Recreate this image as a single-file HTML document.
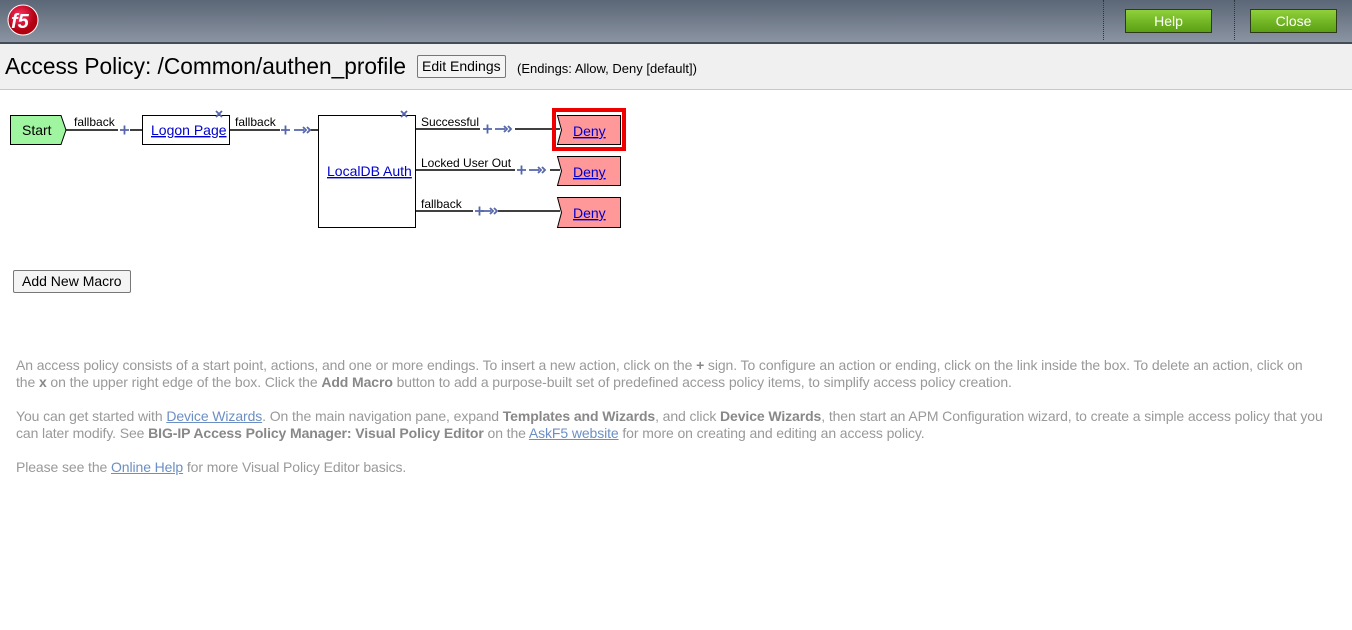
<!DOCTYPE html>
<html><head><style>
body{margin:0;width:1352px;height:630px;background:#fff;font-family:"Liberation Sans",sans-serif;position:relative;overflow:hidden}
.hdr{position:absolute;left:0;top:0;width:1352px;height:42px;background:linear-gradient(#5b6676,#8a94a2);border-bottom:2px solid #444c58}
.sep{position:absolute;top:0;height:40px;border-left:1px dotted #333}
.gbtn{position:absolute;top:9px;height:22px;width:85px;background:linear-gradient(#8fd03a,#5aa014);border:1px solid #2d3a1c;color:#fff;font-size:14px;text-align:center;line-height:22px}
.tbar{position:absolute;left:0;top:44px;width:1352px;height:45px;background:#f0f0f0;border-bottom:1px solid #c8c8c8}
.title{position:absolute;left:5px;top:9px;font-size:22.7px;color:#000;white-space:nowrap}
.btn{position:absolute;background:#f4f4f4;border:1px solid #777;border-radius:2px;font-size:14px;color:#000;padding:0 6px;height:21px;line-height:21px}
.help{position:absolute;left:16px;color:#999;font-size:14px;line-height:17px;white-space:nowrap;letter-spacing:-0.1px}
.help b{color:#888}
.help a{color:#6b8fc4;text-decoration:underline}
svg text{font-family:"Liberation Sans",sans-serif}
</style></head><body>
<div class="hdr">
<svg style="position:absolute;left:6px;top:3px" width="36" height="36"><defs><radialGradient id="r" cx="40%" cy="35%"><stop offset="0" stop-color="#f36"/><stop offset="1" stop-color="#b00010"/></radialGradient></defs><circle cx="17" cy="17" r="15" fill="url(#r)" stroke="#fff" stroke-width="1"/><text x="5" y="25" font-size="20" font-weight="bold" fill="#fff" font-style="italic">f5</text></svg>
<div class="sep" style="left:1103px"></div><div class="sep" style="left:1234px"></div>
<div class="gbtn" style="left:1125px">Help</div><div class="gbtn" style="left:1250px">Close</div>
</div>
<div class="tbar"><div class="title">Access Policy: /Common/authen_profile</div>
<div class="btn" style="left:417px;top:11px;padding:0 4px">Edit Endings</div>
<div style="position:absolute;left:517px;top:17px;font-size:13px">(Endings: Allow, Deny [default])</div></div>
<svg style="position:absolute;left:0;top:100px" width="700" height="140" font-size="13">
<g stroke="#000" stroke-width="1.5" fill="none">
<line x1="66" y1="30" x2="118" y2="30"/><line x1="130" y1="30" x2="142" y2="30"/>
<line x1="229" y1="30" x2="280" y2="30"/><line x1="310" y1="30" x2="318" y2="30"/>
<line x1="415" y1="29" x2="480" y2="29"/><line x1="515" y1="29" x2="560" y2="29"/>
<line x1="415" y1="70" x2="515" y2="70"/><line x1="550" y1="70" x2="560" y2="70"/>
<line x1="415" y1="111" x2="473" y2="111"/><line x1="498" y1="111" x2="560" y2="111"/>
</g>
<path d="M10.5 15.5H61l5 14.5-5 14.5H10.5z" fill="#a0f5a0" stroke="#000"/>
<text x="22" y="35" font-size="14">Start</text>
<rect x="142.5" y="15.5" width="87" height="29" fill="#fff" stroke="#000"/>
<text x="151" y="35" fill="#00c" text-decoration="underline" font-size="14">Logon Page</text>
<rect x="318.5" y="15.5" width="97" height="112" fill="#fff" stroke="#000"/>
<text x="327" y="76" fill="#00c" text-decoration="underline" font-size="14">LocalDB Auth</text>
<g fill="#5566aa" stroke="#5566aa" stroke-width="1.8" fill-opacity="0">
<path d="M216 11l6 6M222 11l-6 6M401 11l6 6M407 11l-6 6"/>
<path d="M120 30h9M124.5 25.5v9M281 30h9M285.5 25.5v9M483 29h9M487.5 24.5v9M517 70h9M521.5 65.5v9M475 111h9M479.5 106.5v9"/>
<path d="M294 30h10M303 27l3 3-3 3M307 27l3 3-3 3"/>
<path d="M495 29h10M504 26l3 3-3 3M508 26l3 3-3 3"/>
<path d="M529 70h10M538 67l3 3-3 3M542 67l3 3-3 3"/>
<path d="M481 111h10M490 108l3 3-3 3M494 108l3 3-3 3"/>
</g>
<text x="74" y="26" font-size="12">fallback</text><text x="235" y="26" font-size="12">fallback</text>
<text x="421" y="26" font-size="12">Successful</text><text x="421" y="67" font-size="12">Locked User Out</text><text x="421" y="108" font-size="12">fallback</text>
<rect x="554" y="10" width="70" height="39" fill="none" stroke="#e00" stroke-width="4"/>
<g fill="#f99" stroke="#000"><path d="M557.5 15.5H620.5V44.5H557.5l4-14.5z"/><path d="M557.5 56.5H620.5V85.5H557.5l4-14.5z"/><path d="M557.5 97.5H620.5V127.5H557.5l4-15z"/></g>
<g fill="#00c" text-decoration="underline" font-size="14"><text x="573" y="36">Deny</text><text x="573" y="77">Deny</text><text x="573" y="118">Deny</text></g>
</svg>
<div class="btn" style="left:13px;top:270px;padding:0 8px">Add New Macro</div>
<div class="help" style="top:357px">An access policy consists of a start point, actions, and one or more endings. To insert a new action, click on the <b>+</b> sign. To configure an action or ending, click on the link inside the box. To delete an action, click on<br>the <b>x</b> on the upper right edge of the box. Click the <b>Add Macro</b> button to add a purpose-built set of predefined access policy items, to simplify access policy creation.</div>
<div class="help" style="top:408px">You can get started with <a>Device Wizards</a>. On the main navigation pane, expand <b>Templates and Wizards</b>, and click <b>Device Wizards</b>, then start an APM Configuration wizard, to create a simple access policy that you<br>can later modify. See <b>BIG-IP Access Policy Manager: Visual Policy Editor</b> on the <a>AskF5 website</a> for more on creating and editing an access policy.</div>
<div class="help" style="top:459px">Please see the <a>Online Help</a> for more Visual Policy Editor basics.</div>
</body></html>
